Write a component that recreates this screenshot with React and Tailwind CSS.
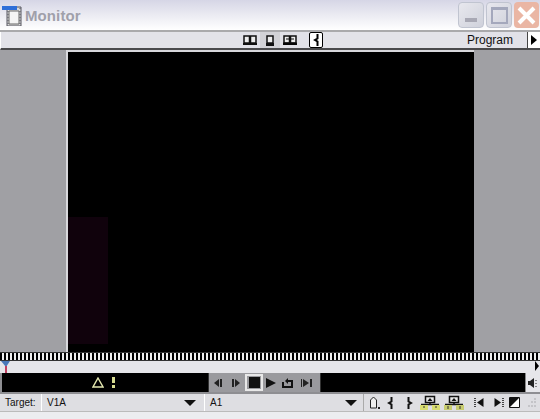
const font = { fontFamily: '"Liberation Sans", Arial, sans-serif' }

const Ticks = () => (
  <div className="h-[9px] bg-black bg-[repeating-linear-gradient(90deg,#000_0,#000_2px,#f0f0f0_2px,#f0f0f0_4px)] border-y border-[#333]" />
)

const Ico = ({ w = 14, h = 14, children, className = '' }) => (
  <svg width={w} height={h} viewBox={`0 0 ${w} ${h}`} className={`shrink-0 ${className}`}>{children}</svg>
)

const Caret = () => (
  <svg width="12" height="6" viewBox="0 0 12 6"><path d="M0 0h12L6 6z" fill="#111" /></svg>
)

const Lift = ({ color, label }) => (
  <Ico w={20} h={15}>
    <path d="M5.500 1.500h9v6h-9z" fill="#e8e8e8" stroke="#111" strokeWidth="1.500" />
    <path d="M10 3l-2.500 3h5z" fill="#111" />
    <path d="M1 9.500h18M10 7v3" stroke="#111" strokeWidth="1.500" />
    <path d="M0 10h8v5H0zM12 10h8v5h-8z" fill={color} />
    <path d={label} stroke="#333" />
  </Ico>
)

export default function App() {
  return (
    <div className="w-[540px] h-[419px] overflow-hidden flex flex-col bg-[#e2e2e8]" style={font}>
      {/* window title */}
      <div className="h-[32px] flex items-start bg-gradient-to-b from-[#d6d6e6] via-[#ebebf2] to-white border-b-2 border-[#a9a9ab]">
        <svg width="24" height="24" viewBox="0 0 24 24" className="ml-[1px] mt-[2px] shrink-0">
          <path d="M6 5h14v19H6z" fill="#d9d9d9" stroke="#55555f" />
          <path d="M8 9h10v13H8z" fill="#f4f4f4" stroke="#666" />
          <path d="M7 6v17M19 6v17" stroke="#55555f" strokeDasharray="1 2" />
          <path d="M1 8h15V4H1z" fill="#2f6fd8" />
        </svg>
        <span className="ml-[0px] mt-[6px] text-[15px] leading-[20px] font-bold tracking-[0.1px] text-[#a0a0aa]">Monitor</span>
        <div className="ml-auto mt-[2px] mr-[1px] flex gap-[2px]">
          <div className="w-[26px] h-[26px] flex items-end justify-center pb-[5px] rounded-[4px] border border-[#c0c4d0] bg-gradient-to-br from-[#e8e8ee] to-[#cfd1db]">
            <div className="w-[12px] h-[4px] bg-[#a8a8b4]" />
          </div>
          <div className="w-[26px] h-[26px] flex items-center justify-center rounded-[4px] border border-[#c0c4d0] bg-gradient-to-br from-[#e8e8ee] to-[#cfd1db]">
            <div className="w-[17px] h-[17px] border-2 border-t-[3px] border-[#a4a8bc]" />
          </div>
          <div className="w-[25px] h-[26px] flex items-center justify-center rounded-[4px] bg-[#eab6a4]">
            <svg width="19" height="19" viewBox="0 0 19 19"><path d="M2 2l15 15M17 2L2 17" stroke="#fff" strokeWidth="4" /></svg>
          </div>
        </div>
      </div>

      {/* monitor toolbar */}
      <div className="h-[18px] flex items-center border-b-2 border-[#4a4a4c] border-l border-l-white bg-[#e2e2e8]">
        <div className="ml-[242px] flex items-center">
          <Ico w={14} h={10}><path d="M1 1h5.500v7H1zM7.500 1H13v7H7.500z" fill="#eee" stroke="#111" strokeWidth="1.500" /><path d="M0 8h14v2H0z" fill="#111" /></Ico>
          <div className="ml-[3px] w-[20px] h-[16px] bg-[#d2d2d6] flex items-center justify-center">
            <Ico w={8} h={11}><path d="M1 1h6v7H1z" fill="#eee" stroke="#111" strokeWidth="1.500" /><path d="M0 8h8v3H0z" fill="#111" /></Ico>
          </div>
          <Ico w={14} h={10} className="ml-[3px]"><path d="M1 1h5.500v7H1zM7.500 1H13v7H7.500z" fill="#eee" stroke="#111" strokeWidth="1.500" /><path d="M3 4h8M0 8h14v2H0z" stroke="#111" /></Ico>
          <div className="ml-[12px] w-[14px] h-[16px] border border-black rounded-[2px] bg-white flex items-center justify-center">
            <Ico w={6} h={12}><path d="M4.500 0v4.500L2 6l2.500 1.500V12" fill="none" stroke="#000" strokeWidth="2" /></Ico>
          </div>
        </div>
        <span className="ml-auto text-[12px] leading-none text-[#111]">Program</span>
        <div className="ml-[14px] w-[13px] h-[16px] border-l border-[#444] bg-white flex items-center justify-center">
          <svg width="6" height="10" viewBox="0 0 6 10"><path d="M0 0l6 5-6 5z" fill="#000" /></svg>
        </div>
      </div>

      {/* viewer */}
      <div className="h-[302px] flex bg-[#a0a0a4]">
        <div className="w-[66px]" />
        <div className="w-[408px] border-l-2 border-t-2 border-[#d8d8dc] bg-black flex flex-col justify-end">
          <div className="w-[40px] h-[127px] mb-[8px] bg-[#10020c]" />
        </div>
      </div>

      <Ticks />

      {/* playhead strip */}
      <div className="h-[12px] flex justify-between bg-[#e6e6ea]">
        <svg width="10" height="12" viewBox="0 0 10 12" className="ml-[1px]"><path d="M0 0h9L5 6z" fill="#4a78b8" /><path d="M4 5h2v7H4z" fill="#c04060" /></svg>
        <svg width="4" height="10" viewBox="0 0 4 10" className="mr-[1px]"><path d="M0 0l4 5-4 5z" fill="#000" /></svg>
      </div>

      {/* timecode and transport */}
      <div className="h-[20px] flex items-stretch bg-[#8e8e92] pl-[2px] pb-[1px]">
        <div className="w-[206px] bg-black flex items-center justify-center gap-[8px] pr-[3px]">
          <svg width="12" height="11" viewBox="0 0 12 11"><path d="M6 1l5 9H1z" fill="none" stroke="#e4e8b0" strokeWidth="1.400" /></svg>
          <svg width="3" height="11" viewBox="0 0 3 11"><path d="M0 0h3v6H0zM0 8h3v3H0z" fill="#d8dc90" /></svg>
        </div>
        <div className="w-[113px] bg-[#9a9a9e] border-x border-[#333] flex items-center pl-[3px]">
          <Ico w={12} h={12}><path d="M7 2v8L2 6zM8 2h2v8H8z" fill="#222" /></Ico>
          <Ico w={12} h={12} className="ml-[6px]"><path d="M2 2h2v8H2zM5 2l5 4-5 4z" fill="#222" /></Ico>
          <div className="ml-[3px] w-[18px] h-[17px] border-2 border-[#e8e8e8] flex items-center justify-center">
            <div className="w-[11px] h-[11px] bg-[#111]" />
          </div>
          <Ico w={12} h={12} className="ml-[2px]"><path d="M1 1l10 5-10 5z" fill="#111" /></Ico>
          <Ico w={12} h={12} className="ml-[5px]"><path d="M1 5v5h9V4H6" fill="none" stroke="#111" strokeWidth="2" /><path d="M6 1v6L3 4z" fill="#111" /></Ico>
          <Ico w={14} h={12} className="ml-[6px]"><path d="M1.500 2v8" stroke="#222" /><path d="M3 2l6 4-6 4zM10 2h2v8h-2z" fill="#222" /></Ico>
        </div>
        <div className="flex-1 bg-black" />
        <div className="w-[15px] bg-[#e6e6ea] flex items-center justify-center border-l border-[#888]">
          <svg width="10" height="10" viewBox="0 0 10 10"><path d="M0 3h2l4-3v10L2 7H0z" fill="#222" /><path d="M8 2v1M8 5v1M8 8v1" stroke="#222" /></svg>
        </div>
      </div>

      {/* target row */}
      <div className="h-[18px] flex items-center bg-[#dedee2] border-t border-[#8e8e92] text-[10px] text-[#111]">
        <span className="ml-[5px] w-[36px]">Target:</span>
        <div className="w-[158px] h-full flex items-center justify-between border-l border-white pl-[5px] pr-[3px]">
          <span>V1A</span>
          <Caret />
        </div>
        <div className="ml-[5px] w-[156px] h-full flex items-center justify-between border-l border-white pl-[5px] pr-[3px]">
          <span>A1</span>
          <Caret />
        </div>
        <div className="ml-[3px] w-[1px] h-full bg-[#aaa]" />
        <div className="ml-[5px] flex items-center">
          <Ico w={12} h={13}><path d="M1.500 12V4l3-3 3 3v8z" fill="#eee" stroke="#222" /><path d="M9 11h2v2H9z" fill="#222" /></Ico>
          <Ico w={6} h={12} className="ml-[6px]"><path d="M4.500 0v4.500L2 6l2.500 1.500V12" fill="none" stroke="#111" strokeWidth="2" /></Ico>
          <Ico w={6} h={12} className="ml-[14px]"><path d="M1.500 0v4.500L4 6 1.500 7.500V12" fill="none" stroke="#111" strokeWidth="2" /></Ico>
          <div className="ml-[7px]"><Lift color="#d8dc70" label="M3 12h2M15 12h2" /></div>
          <div className="ml-[4px]"><Lift color="#c8cc70" label="M4 11v3M16 11v3" /></div>
          <Ico w={11} h={11} className="ml-[10px]"><path d="M1 1v9" stroke="#111" strokeDasharray="1 1" strokeWidth="1.500" /><path d="M9.500 1v9L3 5.500z" fill="#111" /></Ico>
          <Ico w={11} h={11} className="ml-[8px]"><path d="M1.500 1v9L8 5.500z" fill="#111" /><path d="M10 1v9" stroke="#111" strokeDasharray="1 1" strokeWidth="1.500" /></Ico>
          <Ico w={11} h={11} className="ml-[5px]"><path d="M.5.5h10v10H.5z" fill="#fff" stroke="#111" /><path d="M1 1h9L1 10z" fill="#111" /></Ico>
          <Ico w={10} h={11} className="ml-[7px]"><path d="M7 1h2v2H7zM4 4h2v2H4zM7 4h2v2H7zM1 8h2v2H1zM4 8h2v2H4zM7 8h2v2H7z" fill="#c4c4c8" /></Ico>
        </div>
      </div>

      <div className="flex-1 bg-[#ecedf0] border-t border-[#bbb]" />
    </div>
  )
}
